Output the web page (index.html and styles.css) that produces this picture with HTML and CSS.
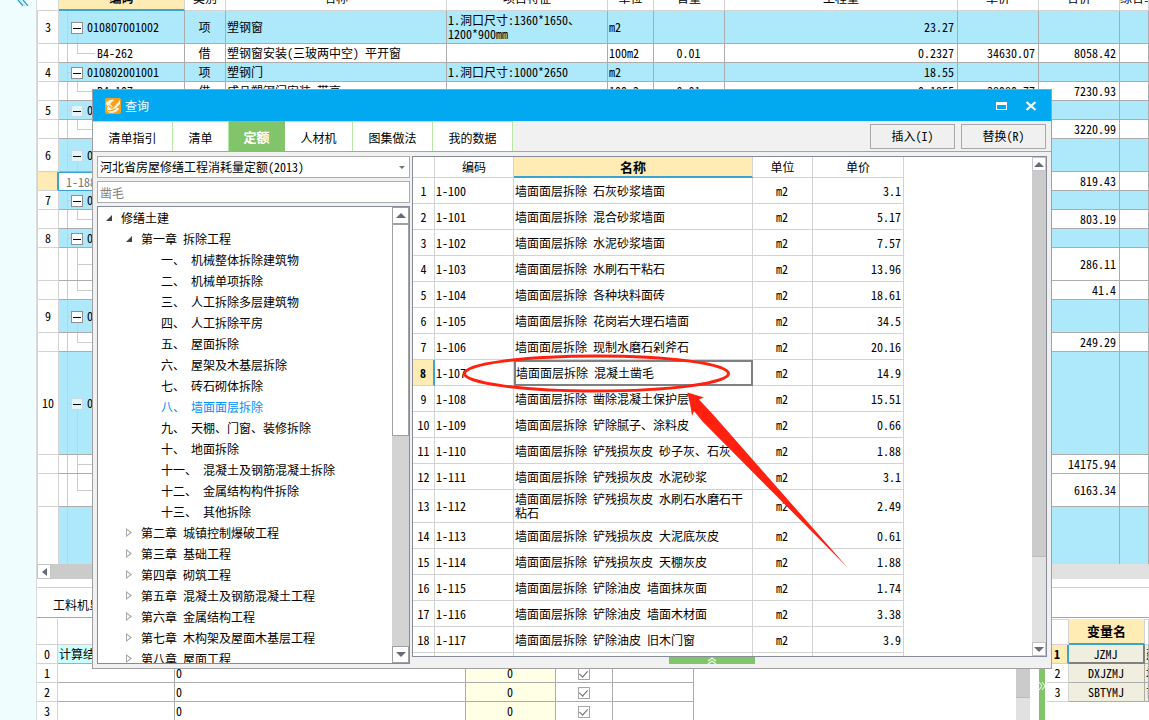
FILE: index.html
```html
<!DOCTYPE html>
<html lang="zh-CN">
<head>
<meta charset="utf-8">
<title>查询</title>
<link rel="stylesheet" href="styles.css">
</head>
<body>
<div class="app">
  <aside class="rail">
    <svg class="rail-icon" width="14" height="6" viewBox="0 0 14 6"><path d="M1 0l5 6M6 0l5 6" stroke="#2c9fd0" stroke-width="1.3" fill="none"/><path d="M3 0l5 6" stroke="#9fdcf2" fill="none"/></svg>
  </aside>
  <main class="main">
    <section class="bill-pane">
      <table class="bill">
        <colgroup><col class="w22"><col class="w126"><col class="w41"><col class="w221"><col class="w161"><col class="w46"><col class="w71"><col class="w233"><col class="w81"><col class="w81"><col></colgroup>
        <thead><tr><th></th><th class="active">编码</th><th>类别</th><th>名称</th><th>项目特征</th><th>单位</th><th>含量</th><th>工程量</th><th>单价</th><th>合价</th><th>综合单价</th></tr></thead>
        <tbody>
          <tr class="item tall"><th>3</th><td class="parent"><button class="toggle" aria-label="折叠"></button>010807001002</td><td class="c">项</td><td>塑钢窗</td><td>1.洞口尺寸:1360*1650、1200*900mm</td><td>m2</td><td></td><td class="r">23.27</td><td></td><td></td><td></td></tr>
          <tr><th></th><td class="child">B4-262</td><td class="c">借</td><td>塑钢窗安装(三玻两中空) 平开窗</td><td></td><td>100m2</td><td class="c">0.01</td><td class="r">0.2327</td><td class="r">34630.07</td><td class="r">8058.42</td><td></td></tr>
          <tr class="item"><th>4</th><td class="parent"><button class="toggle" aria-label="折叠"></button>010802001001</td><td class="c">项</td><td>塑钢门</td><td>1.洞口尺寸:1000*2650</td><td>m2</td><td></td><td class="r">18.55</td><td></td><td></td><td></td></tr>
          <tr><th></th><td class="child">B4-107</td><td class="c">借</td><td>成品塑钢门安装 带亮</td><td></td><td>100m2</td><td class="c">0.01</td><td class="r">0.1855</td><td class="r">38980.77</td><td class="r">7230.93</td><td></td></tr>
          <tr class="item"><th>5</th><td class="parent"><button class="toggle faint" aria-label="折叠"></button>0</td><td colspan="7"></td><td></td><td></td></tr>
          <tr><th></th><td class="child"></td><td colspan="7"></td><td class="r">3220.99</td><td></td></tr>
          <tr class="item tall"><th>6</th><td class="parent"><button class="toggle faint" aria-label="折叠"></button>0</td><td colspan="7"></td><td></td><td></td></tr>
          <tr><th class="current"></th><td class="editing">1-188</td><td colspan="7"></td><td class="r">819.43</td><td></td></tr>
          <tr class="item"><th>7</th><td class="parent"><button class="toggle" aria-label="折叠"></button>0</td><td colspan="7"></td><td></td><td></td></tr>
          <tr><th></th><td class="child"></td><td colspan="7"></td><td class="r">803.19</td><td></td></tr>
          <tr class="item"><th>8</th><td class="parent"><button class="toggle" aria-label="折叠"></button>0</td><td colspan="7"></td><td></td><td></td></tr>
          <tr class="tall"><th></th><td class="child more"></td><td colspan="7"></td><td class="r">286.11</td><td></td></tr>
          <tr><th></th><td class="child"></td><td colspan="7"></td><td class="r">41.4</td><td></td></tr>
          <tr class="item tall"><th>9</th><td class="parent"><button class="toggle" aria-label="折叠"></button>0</td><td colspan="7"></td><td></td><td></td></tr>
          <tr><th></th><td class="child"></td><td colspan="7"></td><td class="r">249.29</td><td></td></tr>
          <tr class="item huge"><th>10</th><td class="parent"><button class="toggle faint" aria-label="折叠"></button>0</td><td colspan="7"></td><td></td><td></td></tr>
          <tr><th></th><td class="child more"></td><td colspan="7"></td><td class="r">14175.94</td><td></td></tr>
          <tr class="tall"><th></th><td class="child"></td><td colspan="7"></td><td class="r">6163.34</td><td></td></tr>
          <tr class="item huge"><th></th><td class="stem"></td><td colspan="7"></td><td></td><td></td></tr>
        </tbody>
      </table>
    </section>
    <div class="hscroll"><button class="arrow left" aria-label="向左"></button><span class="hthumb"></span></div>
    <nav class="detail-tabs"><button>工料机显示</button></nav>
    <section class="detail">
      <div class="quantities">
        <table class="grid">
          <colgroup><col class="w21"><col class="w117"><col class="w291"><col class="w90"><col class="w57"><col class="w81"></colgroup>
          <thead><tr><th></th><th></th><th></th><th></th><th></th><th></th></tr></thead>
          <tbody>
            <tr><th>0</th><td class="result">计算结果</td><td class="result"></td><td class="result"></td><td class="result"></td><td class="result"></td></tr>
            <tr><th>1</th><td></td><td>0</td><td class="amount">0</td><td class="c"><input type="checkbox" checked aria-label="累加 1"></td><td></td></tr>
            <tr><th>2</th><td></td><td>0</td><td class="amount">0</td><td class="c"><input type="checkbox" checked aria-label="累加 2"></td><td></td></tr>
            <tr><th>3</th><td></td><td>0</td><td class="amount">0</td><td class="c"><input type="checkbox" checked aria-label="累加 3"></td><td></td></tr>
          </tbody>
        </table>
      </div>
      <div class="vtrack"><span></span></div>
      <div class="splitter"><svg width="6" height="10" viewBox="0 0 6 10"><path d="M0 1l3 4-3 4M3 1l3 4-3 4" fill="none" stroke="#fff"/></svg></div>
      <table class="grid vars">
        <colgroup><col class="w22"><col class="w76"><col></colgroup>
        <thead><tr><th></th><th class="active">变量名</th><th></th></tr></thead>
        <tbody>
          <tr><th class="current">1</th><td class="picked">JZMJ</td><td>建筑面积</td></tr>
          <tr><th>2</th><td>DXJZMJ</td><td>地下建筑面积</td></tr>
          <tr><th>3</th><td>SBTYMJ</td><td>首层面积</td></tr>
        </tbody>
      </table>
    </section>
  </main>

  <div class="dialog" role="dialog" aria-label="查询">
    <header class="titlebar">
      <svg width="16" height="16" viewBox="0 0 16 16"><rect width="16" height="16" rx="2" fill="#f7a01c"/><path d="M1 5q3-4 8-3L5 6l3 3 4-4 3-3 0 4-4 4q3-1 3 1-3 4-8 4-4 0-4-4 0-2 1-2-2-2-2-4z" fill="#fff6df"/><path d="M3.500 7.500l3.500 3 6.500-7M3 12.500q4 1 8-2" stroke="#f7a01c" stroke-width="1.100" fill="none"/></svg>
      <span class="title">查询</span>
      <button class="win" aria-label="最大化"><svg width="12" height="10" viewBox="0 0 12 10"><path d="M0 1h11v8H0zM1 4v4h9V4z" fill="#fff" fill-rule="evenodd"/></svg></button>
      <button class="win" aria-label="关闭"><svg width="12" height="10" viewBox="0 0 12 10"><path d="M1.500 1l9 8M10.500 1l-9 8" stroke="#fff" stroke-width="2.200"/></svg></button>
    </header>
    <div class="toolbar">
      <nav class="tabs"><button class="t79">清单指引</button><button class="t56">清单</button><button class="t56 on">定额</button><button class="t68">人材机</button><button class="t80">图集做法</button><button class="t80">我的数据</button></nav>
      <button class="cmd">插入(I)</button><button class="cmd">替换(R)</button>
    </div>
    <div class="body">
      <div class="side">
        <div class="combo"><select aria-label="定额库"><option>河北省房屋修缮工程消耗量定额(2013)</option></select></div>
        <input class="search" type="text" value="凿毛" aria-label="搜索">
        <div class="tree">
          <ul class="nodes">
            <li class="l1 open">修缮土建</li>
            <li class="l2 open">第一章 拆除工程</li>
            <li class="l3">一、 机械整体拆除建筑物</li>
            <li class="l3">二、 机械单项拆除</li>
            <li class="l3">三、 人工拆除多层建筑物</li>
            <li class="l3">四、 人工拆除平房</li>
            <li class="l3">五、 屋面拆除</li>
            <li class="l3">六、 屋架及木基层拆除</li>
            <li class="l3">七、 砖石砌体拆除</li>
            <li class="l3 chosen">八、 墙面面层拆除</li>
            <li class="l3">九、 天棚、门窗、装修拆除</li>
            <li class="l3">十、 地面拆除</li>
            <li class="l3">十一、 混凝土及钢筋混凝土拆除</li>
            <li class="l3">十二、 金属结构构件拆除</li>
            <li class="l3">十三、 其他拆除</li>
            <li class="l2 shut">第二章 城镇控制爆破工程</li>
            <li class="l2 shut">第三章 基础工程</li>
            <li class="l2 shut">第四章 砌筑工程</li>
            <li class="l2 shut">第五章 混凝土及钢筋混凝土工程</li>
            <li class="l2 shut">第六章 金属结构工程</li>
            <li class="l2 shut">第七章 木构架及屋面木基层工程</li>
            <li class="l2 shut">第八章 屋面工程</li>
          </ul>
          <div class="tree-scroll"><button class="arrow up" aria-label="向上"></button><span class="tree-thumb"></span><button class="arrow down" aria-label="向下"></button></div>
        </div>
      </div>
      <div class="content">
        <div class="results">
          <div class="results-view">
            <table class="quota">
              <colgroup><col class="w22"><col class="w79"><col class="w239"><col class="w60"><col class="w91"></colgroup>
              <thead><tr><th></th><th>编码</th><th class="active">名称</th><th>单位</th><th>单价</th></tr></thead>
              <tbody>
                <tr><th>1</th><td>1-100</td><td>墙面面层拆除 石灰砂浆墙面</td><td class="c">m2</td><td class="r">3.1</td></tr>
                <tr><th>2</th><td>1-101</td><td>墙面面层拆除 混合砂浆墙面</td><td class="c">m2</td><td class="r">5.17</td></tr>
                <tr><th>3</th><td>1-102</td><td>墙面面层拆除 水泥砂浆墙面</td><td class="c">m2</td><td class="r">7.57</td></tr>
                <tr><th>4</th><td>1-103</td><td>墙面面层拆除 水刷石干粘石</td><td class="c">m2</td><td class="r">13.96</td></tr>
                <tr><th>5</th><td>1-104</td><td>墙面面层拆除 各种块料面砖</td><td class="c">m2</td><td class="r">18.61</td></tr>
                <tr><th>6</th><td>1-105</td><td>墙面面层拆除 花岗岩大理石墙面</td><td class="c">m2</td><td class="r">34.5</td></tr>
                <tr><th>7</th><td>1-106</td><td>墙面面层拆除 现制水磨石剁斧石</td><td class="c">m2</td><td class="r">20.16</td></tr>
                <tr><th class="current">8</th><td>1-107</td><td class="selected">墙面面层拆除 混凝土凿毛</td><td class="c">m2</td><td class="r">14.9</td></tr>
                <tr><th>9</th><td>1-108</td><td>墙面面层拆除 凿除混凝土保护层</td><td class="c">m2</td><td class="r">15.51</td></tr>
                <tr><th>10</th><td>1-109</td><td>墙面面层拆除 铲除腻子、涂料皮</td><td class="c">m2</td><td class="r">0.66</td></tr>
                <tr><th>11</th><td>1-110</td><td>墙面面层拆除 铲残损灰皮 砂子灰、石灰</td><td class="c">m2</td><td class="r">1.88</td></tr>
                <tr><th>12</th><td>1-111</td><td>墙面面层拆除 铲残损灰皮 水泥砂浆</td><td class="c">m2</td><td class="r">3.1</td></tr>
                <tr class="tall"><th>13</th><td>1-112</td><td>墙面面层拆除 铲残损灰皮 水刷石水磨石干粘石</td><td class="c">m2</td><td class="r">2.49</td></tr>
                <tr><th>14</th><td>1-113</td><td>墙面面层拆除 铲残损灰皮 大泥底灰皮</td><td class="c">m2</td><td class="r">0.61</td></tr>
                <tr><th>15</th><td>1-114</td><td>墙面面层拆除 铲残损灰皮 天棚灰皮</td><td class="c">m2</td><td class="r">1.88</td></tr>
                <tr><th>16</th><td>1-115</td><td>墙面面层拆除 铲除油皮 墙面抹灰面</td><td class="c">m2</td><td class="r">1.74</td></tr>
                <tr><th>17</th><td>1-116</td><td>墙面面层拆除 铲除油皮 墙面木材面</td><td class="c">m2</td><td class="r">3.38</td></tr>
                <tr><th>18</th><td>1-117</td><td>墙面面层拆除 铲除油皮 旧木门窗</td><td class="c">m2</td><td class="r">3.9</td></tr>
                <tr><th></th><td></td><td></td><td></td><td></td></tr>
              </tbody>
            </table>
          </div>
          <div class="list-scroll"><button class="arrow up" aria-label="向上"></button><span class="list-thumb"></span><button class="arrow down" aria-label="向下"></button></div>
        </div>
        <div class="handle"><svg width="10" height="7" viewBox="0 0 10 7"><path d="M1 4l4-3 4 3M1 7l4-3 4 3" fill="none" stroke="#e8f8e0" stroke-width="1.300"/></svg></div>
      </div>
    </div>
  </div>

  <svg class="mark" width="390" height="220" viewBox="0 0 390 220">
    <ellipse cx="136.500" cy="23.500" rx="132" ry="17.500" fill="none" stroke="#ff2010" stroke-width="3"/>
    <path d="M227.500 42.500L244 47.500l-5 2 14 15L388 218 243 72l-9-11-2 5-1 -7z" fill="#ff2010"/>
  </svg>
</div>
</body>
</html>
```
FILE: styles.css
```css
* { box-sizing: border-box; }
body { margin: 0; }
body, button, input, select {
  font: 12px/14px "Noto Sans Mono CJK SC", "Noto Sans CJK SC", monospace;
  color: #000;
}
button { padding: 0; margin: 0; border: 0; background: none; }
.app { position: relative; display: flex; height: 100vh; overflow: hidden; background: #fff; }
.rail { flex: none; width: 37px; background: #f0fdff; border-right: 1px solid #d8dcdc; }
.rail-icon { display: block; margin-left: 17px; }
.main { flex: 1; min-width: 0; display: flex; flex-direction: column; }

table { table-layout: fixed; border-collapse: separate; border-spacing: 0; }
th, td { padding: 0 2px 0 1px; border: 0 solid #acacac; border-width: 0 1px 1px 0; overflow: hidden; text-align: left; }
th { font-weight: normal; text-align: center; padding: 0; border-color: #d3d3d3; white-space: nowrap; }
.c { text-align: center; }
.r { text-align: right; }
.active { background: #ffecb5; border-bottom: 2px solid #3aa5d1; font-weight: bold; }
.current { background: #ffecb5; border-right: 2px solid #3aa5d1; font-weight: bold; }
.w21 { width: 21px; } .w22 { width: 22px; } .w41 { width: 41px; } .w46 { width: 46px; }
.w57 { width: 57px; } .w60 { width: 60px; } .w71 { width: 71px; } .w76 { width: 76px; }
.w79 { width: 79px; } .w81 { width: 81px; } .w90 { width: 90px; } .w91 { width: 91px; }
.w117 { width: 117px; } .w126 { width: 126px; } .w161 { width: 161px; } .w221 { width: 221px; }
.w233 { width: 233px; } .w239 { width: 239px; } .w291 { width: 291px; }

.bill-pane { flex: 1; min-height: 0; overflow: hidden; }
.bill { width: 100%; margin-top: -14px; }
.bill tr { height: 19px; }
.bill thead tr { height: 25px; }
.bill .tall { height: 33px; }
.bill .huge { height: 103px; }
.bill .r { padding-right: 3px; }
.bill tbody th { border-left: 1px solid #d3d3d3; }
.item td { background-color: #aee8fb; }
.bill .parent {
  padding-left: 12px;
  background-image: linear-gradient(#c8d0d4, #c8d0d4), linear-gradient(#c8d0d4, #c8d0d4), linear-gradient(#c8d0d4, #c8d0d4);
  background-repeat: no-repeat;
  background-size: 1px 100%, 4px 1px, 1px 50%;
  background-position: 8px 0, 8px 50%, 18px 100%;
}
.bill .child {
  padding-left: 38px;
  background-image: linear-gradient(#ccc, #ccc), linear-gradient(#ccc, #ccc), linear-gradient(#ccc, #ccc);
  background-repeat: no-repeat;
  background-size: 1px 100%, 18px 1px, 1px 50%;
  background-position: 8px 0, 18px 50%, 18px 0;
}
.bill .child.more { background-size: 1px 100%, 18px 1px, 1px 100%; }
.stem { background-image: linear-gradient(#c8d0d4, #c8d0d4); background-repeat: no-repeat; background-size: 1px 100%; background-position: 8px 0; }
.toggle {
  width: 12px; height: 12px; margin-right: 4px; vertical-align: middle;
  border: 1px solid #8f8f8f;
  background: linear-gradient(#000, #000) center / 8px 1px no-repeat, #fff;
}
.toggle.faint { border-color: #c3dce6; background-color: #e4f4fa; }
.bill .editing { padding-left: 7px; color: #777; border-top: 1px solid #3aa5d1; border-bottom-color: #3aa5d1; }

.arrow { flex: none; display: flex; align-items: center; justify-content: center; background: #fff; border: 1px solid #c4c4c4; }
.arrow::before { content: ""; border: 4px solid transparent; }
.arrow.left::before { border-width: 4px 5px 4px 0; border-right-color: #666b78; }
.arrow.up::before { border-width: 0 5px 5px; border-bottom-color: #666b78; }
.arrow.down::before { border-width: 5px 5px 0; border-top-color: #666b78; }
.hscroll { flex: none; display: flex; height: 15px; background: #e1e1e1; }
.hscroll .arrow { width: 14px; }
.hthumb { width: 640px; background: #cbcbcb; }
.detail-tabs { flex: none; display: flex; height: 31px; margin: 8px 0 1px; border-top: 1px solid #b4e3a4; border-bottom: 1px solid #7cc466; }
.detail-tabs button { padding: 5px 16px 0; }
.detail { flex: none; display: flex; margin-bottom: -1px; }
.quantities { flex: 1; min-width: 0; overflow: hidden; }
.grid tr { height: 19px; }
.grid thead tr { height: 26px; }
.quantities table { width: 657px; }
.result { background: #ccffff; }
.amount { background: #ffffe6; text-align: center; }
.vtrack { width: 14px; background: #e1e1e1; }
.vtrack span { display: block; height: 79px; background: #cbcbcb; border-bottom: 1px solid #bbb; }
.splitter { display: flex; align-items: center; width: 6px; margin: 0 2px 0 9px; background: #82c46a; }
.splitter svg { margin-top: 32px; }
.vars { width: 102px; align-self: flex-start; white-space: nowrap; }
.vars th { border-top: 1px solid #d3d3d3; border-left: 0; }
.vars tbody th { border-top: 0; }
.vars td { background: #efeedf; }
.vars td:nth-child(2) { text-align: center; }
.vars .active { font-size: 13px; border-top: 0; }
.vars .picked { border: solid #808080; border-width: 0 2px 2px 0; }
input[type="checkbox"] {
  appearance: none; display: inline-flex; width: 12px; height: 12px; margin: 0; vertical-align: middle;
  justify-content: center; border: 1px solid #a6a6a6; background: #fff;
}
input[type="checkbox"]:checked::before { content: ""; width: 4px; height: 7px; border: solid #666b78; border-width: 0 1px 1px 0; transform: rotate(42deg); }

.dialog {
  position: absolute; left: 92px; right: 97px; top: 89px; bottom: 51px;
  display: flex; flex-direction: column; background: #f1f1f1; border: 1px solid #a0a0a4;
}
.titlebar { flex: none; display: flex; align-items: center; height: 31px; padding: 0 14px 0 12px; background: #02a9f1; }
.title { flex: 1; margin-left: 4px; color: #fff; }
.win { margin-left: 17px; height: 12px; }
.win svg { display: block; }
.toolbar { flex: none; display: flex; align-items: center; gap: 6px; height: 31px; padding-right: 5px; border-bottom: 1px solid #7cc466; }
.tabs { flex: 1; display: flex; align-self: stretch; }
.tabs button { padding-top: 2px; background: #fff; border: 0 solid #b4e8a4; border-width: 1px 1px 0 0; }
.tabs .t79 { width: 80px; } .tabs .t56 { width: 56px; } .tabs .t68 { width: 68px; } .tabs .t80 { width: 80px; }
.tabs .on { padding-top: 0; background: #82c46a; border-color: #82c46a; color: #fff; font-weight: bold; font-size: 13px; }
.cmd { width: 85px; height: 25px; background: #f0f0f0; border: 1px solid #a8a8a8; }
.body { flex: 1; min-height: 0; display: flex; gap: 2px; padding: 4px; }
.side { flex: none; width: 313px; display: flex; flex-direction: column; gap: 3px; }
.combo { display: flex; position: relative; }
.combo::after { content: ""; position: absolute; right: 5px; top: 10px; border: 3px solid transparent; border-top-color: #707480; pointer-events: none; }
.combo select, .search { width: 100%; height: 22px; margin: 0; padding: 0 2px; appearance: none; border: 1px solid #acacac; border-radius: 0; background: #fff; outline: 0; }
.search { color: #808080; }
.tree { flex: 1; min-height: 0; display: flex; background: #fff; border: 1px solid #868b98; overflow: hidden; }
.nodes { flex: 1; margin: 0; padding: 0; list-style: none; }
.nodes li { display: flex; align-items: center; height: 21px; white-space: pre; }
.l1 { padding-left: 8px; }
.l2 { padding-left: 28px; }
.l3 { padding-left: 63px; }
.chosen { color: #0090ff; }
.open::before { content: ""; margin-right: 9px; border: 3px solid transparent; border-right-color: #444; border-bottom-color: #444; }
.shut::before { content: ""; width: 6px; height: 9px; margin-right: 9px; background: #a8a8a8; clip-path: polygon(0 0, 100% 50%, 0 100%, 0 0, 1px 2px, 1px 7px, 4px 50%, 1px 2px); }
.tree-scroll { width: 17px; display: flex; flex-direction: column; background: #d3d3d3; }
.tree-scroll .arrow { height: 17px; border-color: #a0a0a0; }
.tree-thumb { height: 212px; background: #fff; border: 1px solid #a0a0a0; }
.tree-scroll .down, .list-scroll .down { margin-top: auto; }
.content { flex: 1; min-width: 0; display: flex; flex-direction: column; }
.results { flex: 1; min-height: 0; display: flex; background: #fff; border: 1px solid #868b98; }
.results-view { flex: 1; min-width: 0; overflow: hidden; }
.quota { width: 491px; }
.quota tr { height: 26px; }
.quota thead tr { height: 21px; }
.quota .tall { height: 33px; }
.quota td, .quota th { border-color: #d3d3d3; }
.quota .active { border-bottom-color: #3aa5d1; font-size: 13px; }
.quota .current { border-right-color: #3aa5d1; }
.quota .selected { padding-left: 0; border: 2px solid #808080; }
.list-scroll { width: 14px; display: flex; flex-direction: column; background: #e1e1e1; }
.list-scroll .arrow { height: 14px; }
.list-thumb { height: 386px; background: #cbcbcb; border-bottom: 1px solid #bbb; }
.handle { flex: none; display: flex; justify-content: center; width: 86px; height: 7px; margin-left: 257px; background: #82c46a; }
.mark { position: absolute; left: 460px; top: 350px; pointer-events: none; }
```
